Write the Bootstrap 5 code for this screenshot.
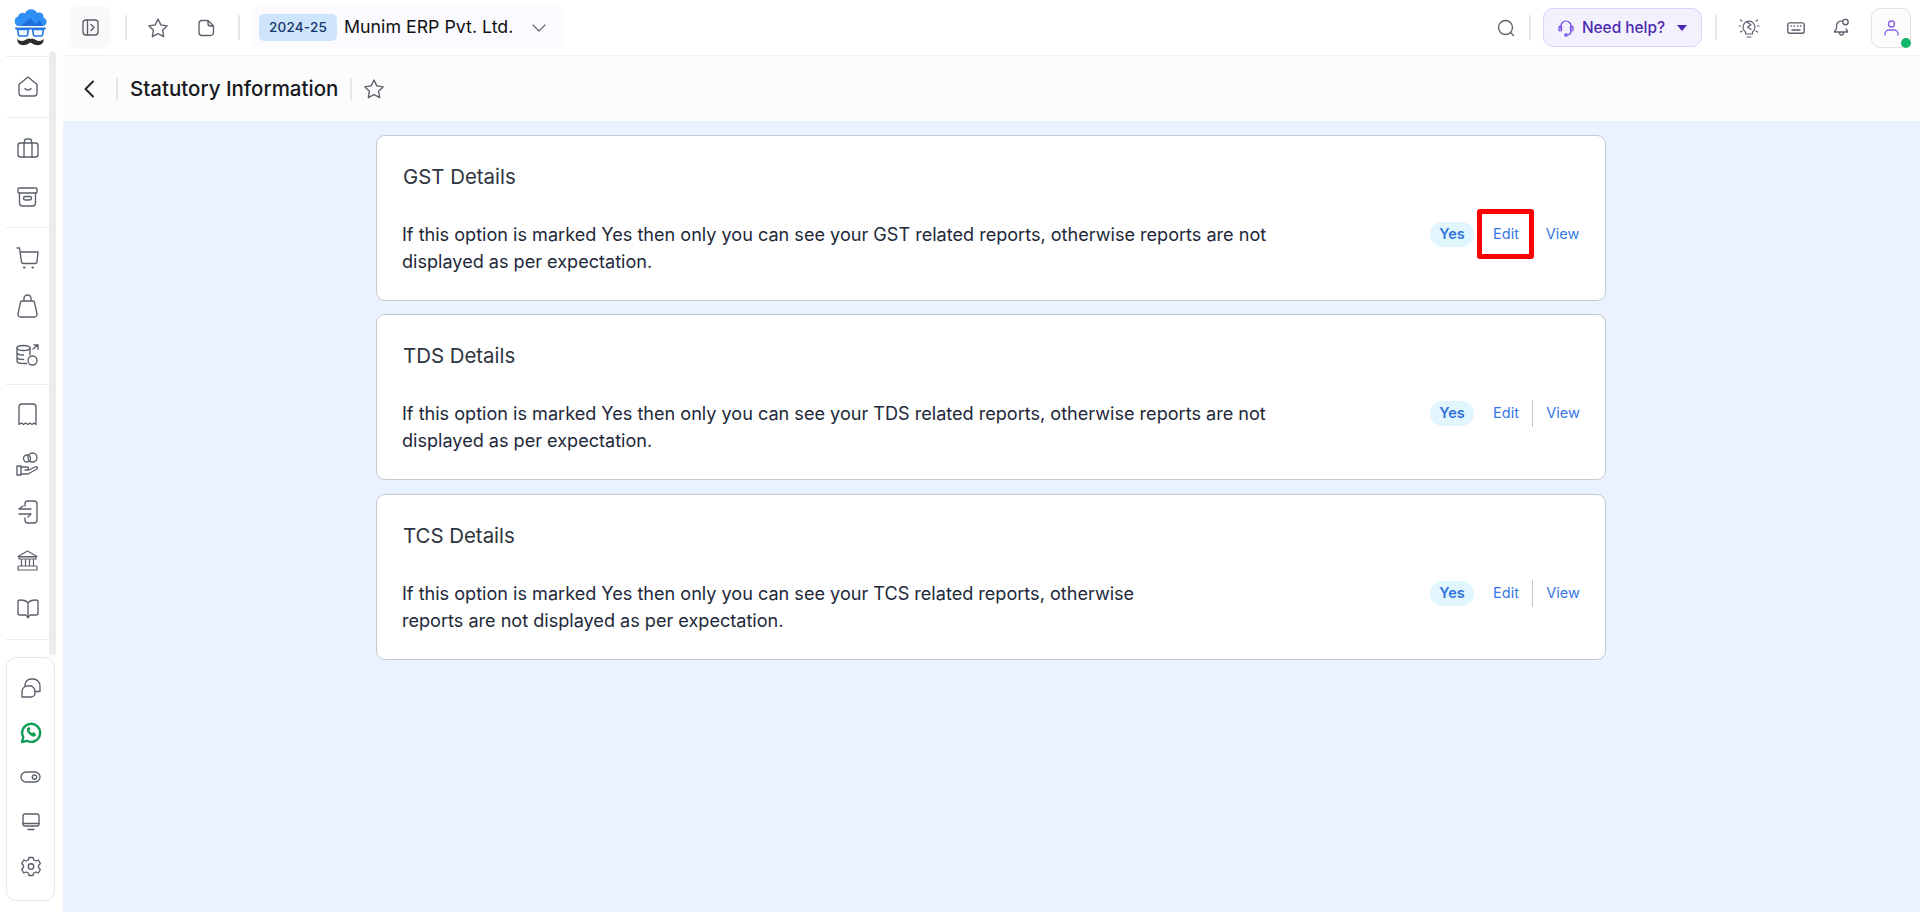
<!DOCTYPE html>
<html lang="en"><head><meta charset="utf-8"><title>Statutory Information</title>
<link href="https://cdn.jsdelivr.net/npm/bootstrap@5.3.0/dist/css/bootstrap.min.css" rel="stylesheet">
<style>
html,body{height:100%;overflow:hidden}
body{font-family:Inter,"Liberation Sans",sans-serif;color:#252b37;background:#fff}
svg{display:block;flex:none;fill:none;stroke:#5a5f69;stroke-width:1.35;stroke-linecap:round;stroke-linejoin:round}
.topbar{height:55px;padding-right:9px}
.logo-cell{width:70px;flex:none;padding-left:14px}
.tool-btn{width:41px;height:43px;flex:none;background:#f9f9f9;border-radius:9px}
.vsep{width:2px;height:25px;flex:none;background:#e8e8e8}
.vsep-a{margin-left:14px}
.vsep-b{margin-left:8px}
.star-cell{width:48px;flex:none}
.star-first{margin-left:7px}
.company{width:311px;height:43px;flex:none;margin-left:12px;background:#fafaff;border-radius:9px;padding:0 16px 0 7px;font-size:17.8px;color:#111;white-space:nowrap}
.year{width:78px;height:27px;margin-right:7px;background:#cfe5fc;color:#17366b;border-radius:5px;font-size:13.5px;font-weight:500;letter-spacing:.2px}
.search-ico{margin-right:14px}
.help-btn{width:159px;height:39px;background:#f4f1fe;border:1px solid #dcd3fb;border-radius:10px;color:#4c2bb3;font-size:15.4px;font-weight:500;margin:0 13px 0 12px}
.caret-shape{width:0;height:0;border-left:5px solid transparent;border-right:5px solid transparent;border-top:6px solid #4a24b5}
.bulb-ico{margin-left:21px}
.kb-ico{margin-left:27px}
.bell-ico{margin-left:28px}
.avatar{width:40px;height:40px;background:#fbfbfb;border:1px solid #e3e3e3;border-radius:9px;margin-left:21px}
.online{width:10px;height:10px;background:#12b76a;border-radius:50%;right:-1px;bottom:-1px}
.rail{width:63px;height:857px;flex:none}
.rail-scroll{width:56px;height:593px;padding-left:6px;position:relative}
.rail-track{position:absolute;left:49px;top:-5px;width:7px;height:604px;background:#ececec;border-radius:4px}
.rail-group{width:43px;border-bottom:1px solid #ececec}
.rail-top{margin-top:1px;border-top:1px solid #ececec;padding-bottom:2px}
.rail-item{height:48.5px}
.rail-tools{width:49px;height:244px;margin:8px 0 0 6px;border:1px solid #e8e8e8;border-radius:10px;padding-top:8px}
.tool-item{height:44.5px}
.content-area{min-width:0;background:#ebf2ff}
.subbar{height:66px;background:#fcfcfc;border-top:1px solid #f1f1f1;padding-left:20px}
.page-title{font-size:20.5px;font-weight:500;color:#17191f;margin:0 12px;padding-top:2px}
.title-sep{width:2px;height:22px;background:#e6e6e6}
.back-sep{margin-left:21px}
.title-star{margin-left:10px}
.card-stack{padding:13.5px 0 0 313px}
.stat-card{width:1230px;height:166px;margin-bottom:13px;border:1px solid #c6c9cf;border-radius:9px;background:#fff;padding:26px 12px 0 25px;--bs-card-border-color:#c6c9cf}
.stat-last{margin-top:1px}
.stat-title{font-size:20.4px;font-weight:400;line-height:30px;margin:0 0 29px 1px;color:#2e3440}
.stat-text{width:880px;font-size:18.08px;line-height:27px;margin:0;color:#22283a}
.stat-text-narrow{width:770px}
.stat-actions{font-size:14.5px;height:27px}
.yes-pill{width:44px;height:25px;background:#e1f6fd;border-radius:13px;color:#2f74dc;font-weight:600;margin-right:6px}
.act-link{width:52px;height:27px;color:#3577e6;text-decoration:none}
.act-view{width:61px}
.act-sep{border-left:1px solid #c3c5ca}
.red-mark{left:-3px;top:-12px;width:57px;height:50px;border:5px solid #f00;border-radius:3px;pointer-events:none}
</style></head><body>
<header class="topbar d-flex align-items-center">
 <div class="logo-cell d-flex">
  <svg width="33" height="39" viewBox="0 0 33 39" style="stroke:none">
   <path d="M5 18C0 18-1 10 4 8.500 5 5 9 4 11 5.500 13 0 21 0 23 5c4-1.500 7 1 6.500 4.500 4 1 4.500 8.500-1 8.500z" fill="#2f8ff2"/>
   <path d="M7 18l9-8 7 8zM19 18l7-6 3 6z" fill="#1c6fdc"/>
   <path d="M2 20.500h29" stroke="#2478e4" stroke-width="2"/>
   <path d="M3.500 21.500h11l-1 5.500a1 1 0 0 1-1 1h-7a1 1 0 0 1-1-1zM18.500 21.500h11l-1 5.500a1 1 0 0 1-1 1h-7a1 1 0 0 1-1-1z" fill="#f4f9ff" stroke="#2478e4" stroke-width="1.600"/>
   <path d="M16.500 31c3-2.500 6 3.500 11 1.500 1-.4 1.500-1 1.500-2 2 3-1 7.500-7 6.500-3-.5-4-2-5.500-2.500-1.500.5-2.500 2-5.500 2.500-6 1-9-3.500-7-6.500 0 1 .5 1.600 1.500 2 5 2 8-4 11-1.500z" fill="#2b2b2b"/>
  </svg>
 </div>
 <div class="tool-btn d-flex align-items-center justify-content-center">
  <svg width="17" height="17" viewBox="0 0 17 17"><rect x="1" y="1" width="15" height="15" rx="3"/><path d="M5.500 1v15M9 5.500l3 3-3 3"/></svg>
 </div>
 <span class="vsep vsep-a"></span>
 <div class="star-cell star-first d-flex justify-content-center"><svg width="24" height="24" viewBox="0 0 24 24"><path d="m12 3 2.800 5.900 6.400.9-4.600 4.500 1.100 6.400L12 17.700l-5.700 3 1.100-6.400-4.600-4.500 6.400-.9z"/></svg></div>
 <div class="star-cell d-flex justify-content-center"><svg width="17" height="18" viewBox="0 0 17 18"><path d="M4 1.500h6l5.500 5.500v6.500a3 3 0 0 1-3 3H4a3 3 0 0 1-3-3v-9a3 3 0 0 1 3-3zM10 1.500v3a2.500 2.500 0 0 0 2.500 2.500h3"/></svg></div>
 <span class="vsep vsep-b"></span>
 <div class="company d-flex align-items-center">
  <span class="year d-flex align-items-center justify-content-center">2024-25</span>
  <span>Munim ERP Pvt. Ltd.</span>
  <svg class="ms-auto" width="16" height="10" viewBox="0 0 16 10" style="stroke:#666b75;stroke-width:1.200"><path d="m2 2 6 6 6-6"/></svg>
 </div>
 <div class="ms-auto d-flex align-items-center">
  <svg class="search-ico" width="18" height="18" viewBox="0 0 18 18"><circle cx="8.500" cy="8.500" r="7"/><path d="m14 14 2.500 2.500"/></svg>
  <span class="vsep"></span>
  <div class="help-btn d-flex align-items-center justify-content-center gap-2">
   <svg width="16" height="18" viewBox="0 0 16 18" style="stroke:#6b42e0;stroke-width:1.200"><path d="M3 10V7a5 5 0 0 1 10 0v3"/><rect x="1" y="7" width="2.500" height="5" rx="1.200"/><rect x="12.500" y="7" width="2.500" height="5" rx="1.200"/><path d="M13 12c0 3-2 4-4 4"/><circle cx="8" cy="16" r="1.200"/></svg>
   <span>Need help?</span><span class="caret-shape ms-1"></span>
  </div>
  <span class="vsep"></span>
  <svg class="bulb-ico" width="22" height="22" viewBox="0 0 22 22" style="stroke-width:1.200"><path d="M7.500 15a6 6 0 1 1 7 0v2h-7zM9 20h4M9 5l4 3-3.500 2 3.500 2.500M1 9h1.500M19.500 9H21M2.500 3 4 4M19.500 3 18 4M2.500 15 4 14M19.500 15 18 14"/></svg>
  <svg class="kb-ico" width="18" height="12" viewBox="0 0 18 12"><rect x=".8" y=".8" width="16.400" height="10.400" rx="2"/><path d="M4 4h.5M7 4h.5M10.500 4h.5M13.500 4h.5M5 8h8"/></svg>
  <svg class="bell-ico" width="17" height="19" viewBox="0 0 17 19"><path d="M9 3.200C5 2.600 3.500 5.500 3.500 8v2.500c0 1.500-2.500 2-2 3.500h13c.5-1-1-2-1.500-3M6.500 14.500c0 3.500 4 3.500 4 0"/><circle cx="12.500" cy="4" r="2.700"/></svg>
  <div class="avatar position-relative d-flex align-items-center justify-content-center">
   <svg width="15" height="16" viewBox="0 0 15 16" style="stroke:#8a63e8"><circle cx="7.500" cy="4" r="3"/><path d="M1 15v-1a4 4 0 0 1 4-4h5a4 4 0 0 1 4 4v1"/></svg>
   <span class="online position-absolute"></span>
  </div>
 </div>
</header>
<div class="d-flex">
 <nav class="rail">
  <div class="rail-scroll">
   <span class="rail-track"></span>
   <div class="rail-group rail-top d-flex flex-column justify-content-center" style="height:62px">
    <div class="rail-item d-flex align-items-center justify-content-center"><svg width="20" height="21" viewBox="0 0 20 21"><path d="M1 8.500 10 1l9 7.500V17a3 3 0 0 1-3 3H4a3 3 0 0 1-3-3zM7 12.500c1.500 2 4.500 2 6 0"/></svg></div>
   </div>
   <div class="rail-group d-flex flex-column justify-content-center" style="height:110px">
    <div class="rail-item d-flex align-items-center justify-content-center"><svg width="22" height="20" viewBox="0 0 22 20"><rect x="1" y="5" width="20" height="14" rx="2.500"/><path d="M7 19V5M15 19V5M7.500 5V3a2 2 0 0 1 2-2h3a2 2 0 0 1 2 2v2"/></svg></div>
    <div class="rail-item d-flex align-items-center justify-content-center"><svg width="21" height="20" viewBox="0 0 21 20"><rect x="1" y="1" width="19" height="5" rx="1"/><path d="M2.500 6v10a3 3 0 0 0 3 3h10a3 3 0 0 0 3-3V6"/><rect x="6.500" y="9.500" width="8" height="3.500" rx="1.700"/></svg></div>
   </div>
   <div class="rail-group d-flex flex-column justify-content-center" style="height:157px">
    <div class="rail-item d-flex align-items-center justify-content-center"><svg width="23" height="22" viewBox="0 0 23 22"><path d="M1 1h2.500L5.500 15a2 2 0 0 0 2 1.500H19a2 2 0 0 0 2-2L22 5H4"/><path d="M8 20.500h.5M16.500 20.500h.5" stroke-width="2.200"/></svg></div>
    <div class="rail-item d-flex align-items-center justify-content-center"><svg width="21" height="24" viewBox="0 0 21 24"><path d="M5 7h11a1.500 1.500 0 0 1 1.500 1.300L20 20a2.500 2.500 0 0 1-2.500 3h-14A2.500 2.500 0 0 1 1 20L3.500 8.300A1.500 1.500 0 0 1 5 7zM7 7V4.500a3.500 3.500 0 0 1 7 0V7"/></svg></div>
    <div class="rail-item d-flex align-items-center justify-content-center"><svg width="23" height="22" viewBox="0 0 23 22"><ellipse cx="7.500" cy="4" rx="6.500" ry="2.500"/><path d="M1 4v13c0 1.500 3 2.500 6.500 2.500h3M1 8.500c0 1.500 3 2.500 6.500 2.500M1 13c0 1.500 3 2.500 6.500 2.500M14 4v7M17 5l5-4M18 1h4v4"/><circle cx="16.500" cy="16.500" r="4.500"/></svg></div>
   </div>
   <div class="rail-group d-flex flex-column justify-content-center" style="height:255px">
    <div class="rail-item d-flex align-items-center justify-content-center"><svg width="19" height="24" viewBox="0 0 19 24"><path d="M1 21.500V4a3 3 0 0 1 3-3h11a3 3 0 0 1 3 3v17.500l-2-1.500-2 1.500-2-1.500-2 1.500-2.500-1.500-2 1.500-2-1.500z"/></svg></div>
    <div class="rail-item d-flex align-items-center justify-content-center"><svg width="23" height="24" viewBox="0 0 23 24"><rect x="1" y="14" width="4" height="9"/><path d="M5 15h6c2 0 2 3 0 3H9M5 22h7l9-5c1-1 0-3-2-2l-6 3"/><circle cx="11" cy="6.500" r="3.500"/><ellipse cx="16.500" cy="5.500" rx="4.500" ry="4.500"/></svg></div>
    <div class="rail-item d-flex align-items-center justify-content-center"><svg width="20" height="24" viewBox="0 0 20 24"><path d="M7 6V4a3 3 0 0 1 3-3h6a3 3 0 0 1 3 3v16a3 3 0 0 1-3 3h-6a3 3 0 0 1-3-3v-2M1 9h12M5 6 1 9M1 14h12l-3 3"/></svg></div>
    <div class="rail-item d-flex align-items-center justify-content-center"><svg width="21" height="21" viewBox="0 0 21 21" style="stroke-width:1.200"><path d="M10.500 1 20 6.500H1zM2 7h17v2H2zM4.500 9v7M8.500 9v7M12.500 9v7M16.500 9v7M2 16h17a1 1 0 0 1 1 1v3H1v-3a1 1 0 0 1 1-1z"/></svg></div>
    <div class="rail-item d-flex align-items-center justify-content-center"><svg width="22" height="20" viewBox="0 0 22 20"><path d="M11 4C9 1 5 1 3 1a2 2 0 0 0-2 2v11a2 2 0 0 0 2 2h6l2 3 2-3h6a2 2 0 0 0 2-2V3a2 2 0 0 0-2-2c-2 0-6 0-8 3zv13"/></svg></div>
   </div>
  </div>
  <div class="rail-tools d-flex flex-column">
   <div class="tool-item d-flex align-items-center justify-content-center"><svg width="21" height="20" viewBox="0 0 21 20"><path d="M5 8V7a6 6 0 0 1 6-6h2a7 7 0 0 1 7 7v5.500h-5"/><path d="M8 8h-.5a5.500 5.500 0 0 0-5.500 5.500V19h9a4 4 0 0 0 4-4v-1.500A5.500 5.500 0 0 0 8 8z"/></svg></div>
   <div class="tool-item d-flex align-items-center justify-content-center"><svg width="22" height="22" viewBox="0 0 22 22" style="stroke:#0f9d58;stroke-width:2.400"><path d="M2 20l1.300-4.800A9 9 0 1 1 7 18.800z"/><path d="M7.500 6.500c-1 2 .5 4.500 2.500 6s4 2.300 5.500 1l-.5-2-2-1-1 1c-1.500-.7-2.500-1.700-3-3l1-1-1-2z" fill="#0f9d58" stroke-width="1"/></svg></div>
   <div class="tool-item d-flex align-items-center justify-content-center"><svg width="21" height="12" viewBox="0 0 21 12"><rect x="1" y="1" width="19" height="10" rx="5"/><circle cx="14.500" cy="6" r="2.200"/></svg></div>
   <div class="tool-item d-flex align-items-center justify-content-center"><svg width="18" height="18" viewBox="0 0 18 18"><rect x="1" y="1" width="16" height="12" rx="2"/><path d="M1 10.500h16M6 16.500h6"/></svg></div>
   <div class="tool-item d-flex align-items-center justify-content-center"><svg width="20" height="21" viewBox="0 0 20 21"><path d="M8 1.500h4l.7 2.500 2.300 1 2.300-1 2 3.500-1.800 2 0 2 1.800 2-2 3.500-2.300-1-2.300 1-.7 2.500H8l-.7-2.500-2.300-1-2.300 1-2-3.500 1.800-2v-2l-1.800-2 2-3.500 2.300 1 2.300-1z"/><circle cx="10" cy="10.500" r="2.800"/></svg></div>
  </div>
 </nav>
 <main class="content-area flex-fill">
  <div class="subbar d-flex align-items-center">
   <svg width="12" height="18" viewBox="0 0 12 18" style="stroke:#23262e;stroke-width:2"><path d="M10 1.500 2.500 9l7.500 7.500"/></svg>
   <span class="title-sep back-sep"></span>
   <h1 class="page-title mb-0">Statutory Information</h1>
   <span class="title-sep"></span>
   <svg class="title-star" width="24" height="24" viewBox="0 0 24 24"><path d="m12 3 2.800 5.900 6.400.9-4.600 4.500 1.100 6.400L12 17.700l-5.700 3 1.100-6.400-4.600-4.500 6.400-.9z"/></svg>
  </div>
  <div class="card-stack d-flex flex-column">
   <section class="card stat-card">
    <h2 class="stat-title">GST Details</h2>
    <div class="d-flex align-items-start justify-content-between">
     <p class="stat-text">If this option is marked Yes then only you can see your GST related reports, otherwise reports are not displayed as per expectation.</p>
     <div class="stat-actions d-flex align-items-center">
      <span class="yes-pill d-flex align-items-center justify-content-center">Yes</span>
      <span class="position-relative"><a href="#" class="act-link d-flex align-items-center justify-content-center">Edit</a><span class="red-mark position-absolute"></span></span>
      <a href="#" class="act-link act-view d-flex align-items-center justify-content-center">View</a>
     </div>
    </div>
   </section>
   <section class="card stat-card">
    <h2 class="stat-title">TDS Details</h2>
    <div class="d-flex align-items-start justify-content-between">
     <p class="stat-text">If this option is marked Yes then only you can see your TDS related reports, otherwise reports are not displayed as per expectation.</p>
     <div class="stat-actions d-flex align-items-center">
      <span class="yes-pill d-flex align-items-center justify-content-center">Yes</span>
      <a href="#" class="act-link d-flex align-items-center justify-content-center">Edit</a>
      <a href="#" class="act-link act-view act-sep d-flex align-items-center justify-content-center">View</a>
     </div>
    </div>
   </section>
   <section class="card stat-card stat-last">
    <h2 class="stat-title">TCS Details</h2>
    <div class="d-flex align-items-start justify-content-between">
     <p class="stat-text stat-text-narrow">If this option is marked Yes then only you can see your TCS related reports, otherwise reports are not displayed as per expectation.</p>
     <div class="stat-actions d-flex align-items-center">
      <span class="yes-pill d-flex align-items-center justify-content-center">Yes</span>
      <a href="#" class="act-link d-flex align-items-center justify-content-center">Edit</a>
      <a href="#" class="act-link act-view act-sep d-flex align-items-center justify-content-center">View</a>
     </div>
    </div>
   </section>
  </div>
 </main>
</div>
<script src="https://cdn.jsdelivr.net/npm/bootstrap@5.3.0/dist/js/bootstrap.bundle.min.js"></script>
</body></html>
